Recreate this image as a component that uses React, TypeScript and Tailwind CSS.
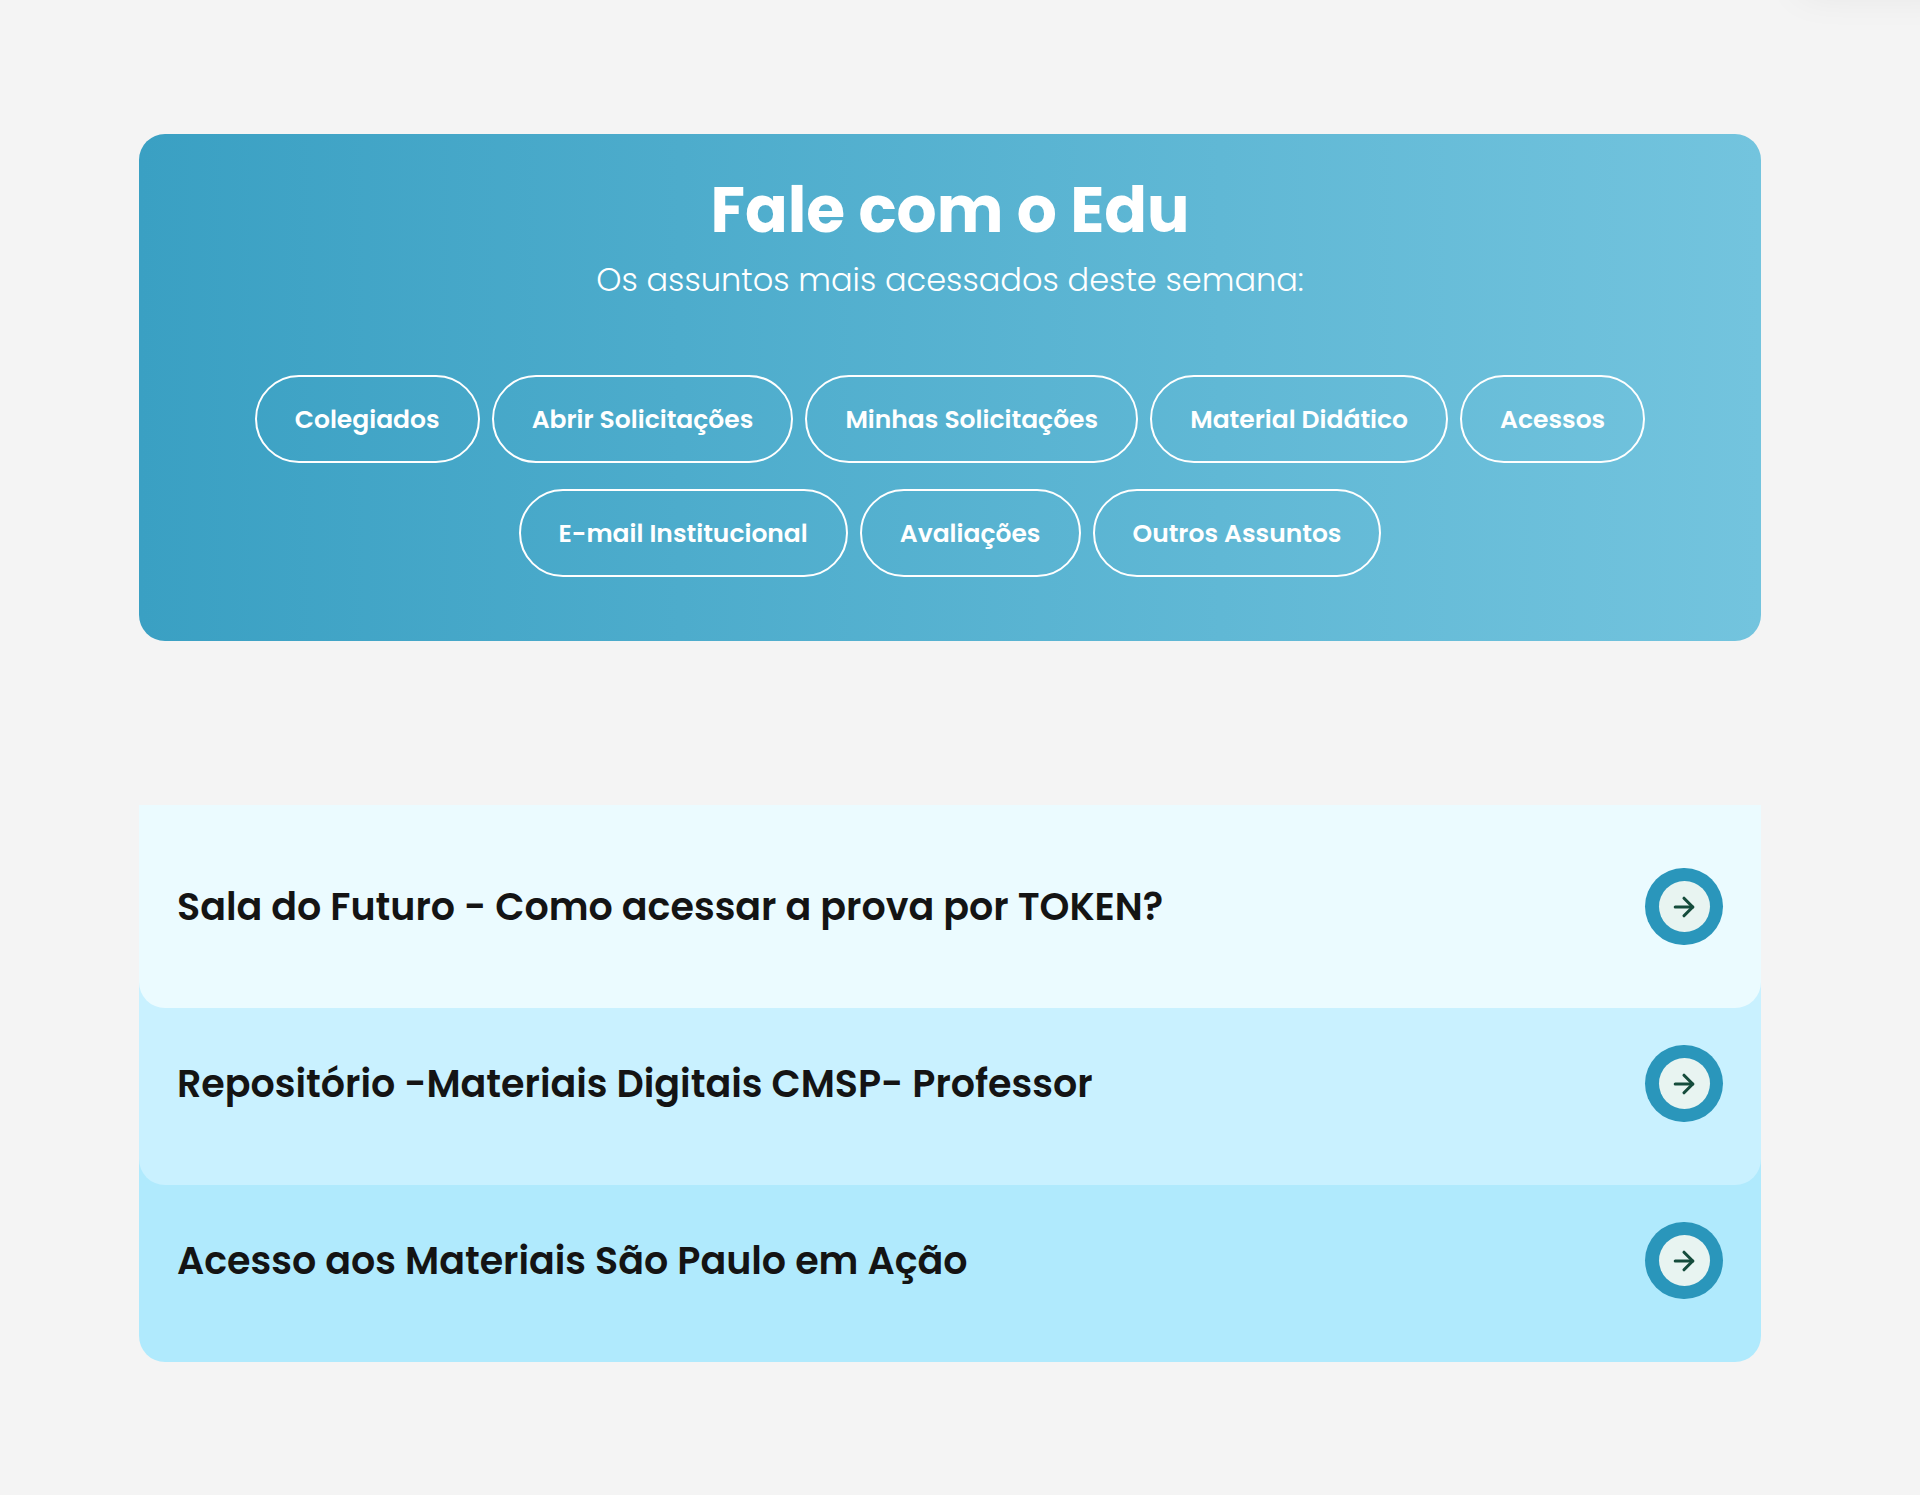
import { ArrowRight } from 'lucide-react';

interface Article {
  title: string;
  className: string;
}

const subjects = [
  'Colegiados',
  'Abrir Solicitações',
  'Minhas Solicitações',
  'Material Didático',
  'Acessos',
  'E-mail Institucional',
  'Avaliações',
  'Outros Assuntos',
];

const articles: Article[] = [
  { title: 'Sala do Futuro - Como acessar a prova por TOKEN?', className: 'z-30 bg-[#ebfbff]' },
  { title: 'Repositório -Materiais Digitais CMSP- Professor', className: 'z-20 bg-[#c9f1ff]' },
  { title: 'Acesso aos Materiais São Paulo em Ação', className: 'z-10 bg-[#b0eafd]' },
];

function SubjectBanner() {
  return (
    <section className="rounded-[26px] bg-linear-to-r/srgb from-[#3aa0c3] to-[#73c4de] px-10 pt-9 pb-16 text-center text-white">
      <h1 className="text-[63px] leading-20 font-bold">Fale com o Edu</h1>
      <p className="text-[32px] leading-[60px] font-light">Os assuntos mais acessados deste semana:</p>
      <div className="mt-[65px] flex flex-wrap justify-center gap-x-3 gap-y-[26px]">
        {subjects.map((subject) => (
          <button
            key={subject}
            type="button"
            className="h-[88px] cursor-pointer rounded-full border-2 border-white px-[38px] pt-0.5 text-[25px] font-semibold hover:bg-white/10"
          >
            {subject}
          </button>
        ))}
      </div>
    </section>
  );
}

function ArticleList() {
  return (
    <ul className="mt-[164px]">
      {articles.map((article) => (
        <li
          key={article.title}
          className={`relative -mb-[26px] rounded-b-[26px] ${article.className}`}
        >
          <a href="#" className="flex h-[203px] items-center justify-between px-[38px]">
            <span className="text-[38px] leading-14 font-semibold text-[#141414]">{article.title}</span>
            <span className="flex h-[77px] w-[78px] items-center justify-center rounded-full bg-[#2a96bb]">
              <span className="flex size-[51px] items-center justify-center rounded-full bg-[#e8f4f1]">
                <ArrowRight className="size-[30px] text-[#154c3c]" strokeWidth={2.5} />
              </span>
            </span>
          </a>
        </li>
      ))}
    </ul>
  );
}

export default function App() {
  return (
    <div className="relative min-h-screen overflow-hidden bg-[#f4f4f4] font-['Poppins','Inter',sans-serif]">
      <div className="absolute -top-10 -right-10 h-8 w-40 shadow-[0_0_40px_rgba(0,0,0,0.08)]" />
      <main className="pt-[134px] pr-[159px] pb-[158px] pl-[139px]">
        <SubjectBanner />
        <ArticleList />
      </main>
    </div>
  );
}
